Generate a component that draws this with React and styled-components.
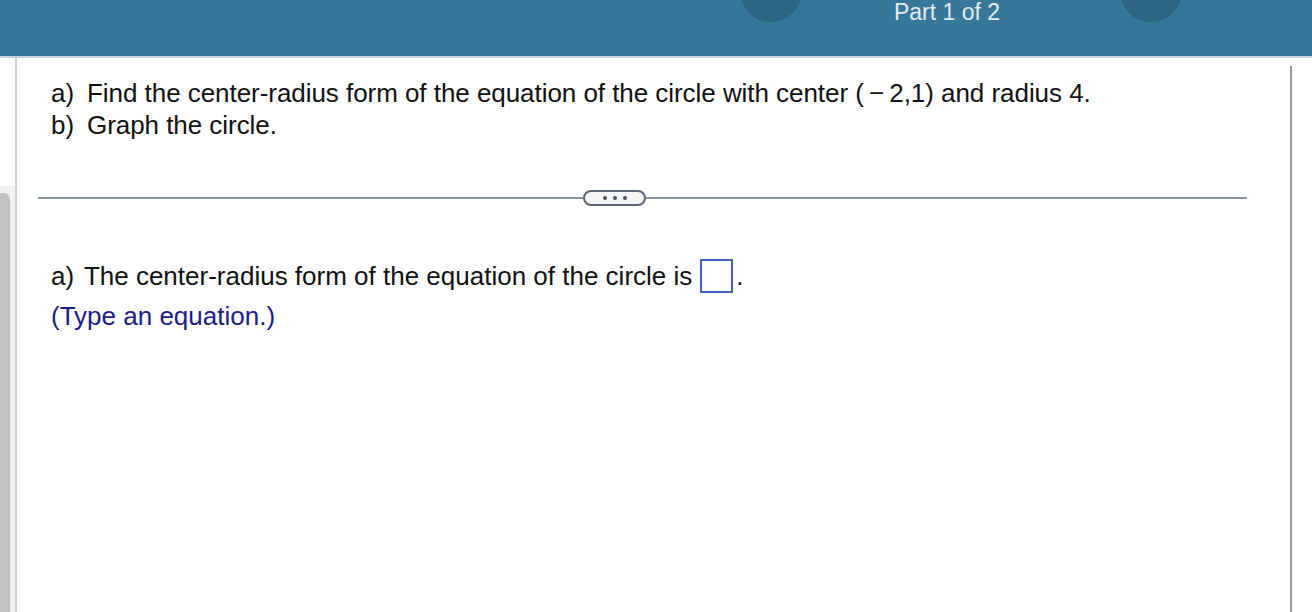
import styled, { createGlobalStyle } from "styled-components"

const Global = createGlobalStyle`
  html, body {
    margin: 0;
    padding: 0;
    background: #ffffff;
  }
  body {
    font-family: "Liberation Sans", Arial, Helvetica, sans-serif;
    color: #111;
  }
`

const Page = styled.div`
  width: 1312px;
  height: 612px;
  overflow: hidden;
  display: flex;
  flex-direction: column;
`

const Header = styled.header`
  height: 56px;
  flex-shrink: 0;
  background: #36779a;
  border-bottom: 2px solid #c6d2de;
  display: flex;
  align-items: flex-start;
  overflow: hidden;
`

const NavCircle = styled.div`
  width: 62px;
  height: 62px;
  border-radius: 50%;
  background: #2e6584;
  margin-top: -40px;
  margin-left: ${(p) => p.$left}px;
  flex-shrink: 0;
`

const PartLabel = styled.div`
  width: 110px;
  margin-left: 90px;
  padding-top: 1px;
  text-align: center;
  font-size: 23px;
  line-height: 22px;
  color: #e3ebf2;
  white-space: nowrap;
`

const Main = styled.div`
  flex: 1;
  display: flex;
  min-height: 0;
`

const Gutter = styled.div`
  width: 15px;
  border-right: 2px solid #cfd1dd;
  display: flex;
  flex-direction: column;
`

const GutterSpace = styled.div`
  height: 128px;
`

const Track = styled.div`
  flex: 1;
  background: #f1f1f1;
  padding-top: 7px;
  display: flex;
`

const Thumb = styled.div`
  width: 10px;
  background: #c2c2c2;
  border-radius: 0 6px 0 0;
`

const Content = styled.div`
  flex: 1;
  display: flex;
  flex-direction: column;
  padding-top: 19px;
  font-size: 26px;
`

const RightEdge = styled.div`
  width: 2px;
  margin-top: 8px;
  margin-right: 20px;
  background: #9199a8;
`

const Question = styled.div`
  display: grid;
  grid-template-columns: 36px 1fr;
  padding-left: 34px;
  line-height: 32px;
  white-space: nowrap;
  letter-spacing: -0.05px;
`

const Divider = styled.div`
  display: flex;
  align-items: center;
  height: 16px;
  margin: 49px 43px 0 21px;
`

const Rule = styled.div`
  height: 2px;
  background: #8a93a3;
  width: ${(p) => (p.$width ? `${p.$width}px` : "auto")};
  flex: ${(p) => (p.$width ? "none" : 1)};
`

const MoreButton = styled.button`
  width: 63px;
  height: 16px;
  box-sizing: border-box;
  border: 2px solid #5b6575;
  border-radius: 8px;
  background: #f4f5f7;
  padding: 0;
  display: flex;
  align-items: center;
  justify-content: center;
  gap: 6px;
  cursor: pointer;
`

const Dot = styled.span`
  width: 4px;
  height: 4px;
  border-radius: 50%;
  background: #4a5160;
`

const AnswerRow = styled.div`
  display: flex;
  align-items: center;
  height: 36px;
  margin-top: 52px;
  padding-left: 34px;
  white-space: pre;
`

const Label = styled.span`
  margin-right: 3px;
`

const AnswerBox = styled.span`
  display: inline-block;
  width: 33px;
  height: 34px;
  box-sizing: border-box;
  border: 2px solid #3d61c4;
  margin-left: 8px;
`

const Period = styled.span`
  margin-left: 3px;
`

const Hint = styled.div`
  margin-top: 6px;
  padding-left: 34px;
  line-height: 32px;
  color: #1b1b8a;
`

export default function App() {
  return (
    <Page>
      <Global />
      <Header>
        <NavCircle $left={740} />
        <PartLabel>Part 1 of 2</PartLabel>
        <NavCircle $left={118} />
      </Header>
      <Main>
        <Gutter>
          <GutterSpace />
          <Track>
            <Thumb />
          </Track>
        </Gutter>
        <Content>
          <Question>
            <span>a)</span>
            <span>Find the center-radius form of the equation of the circle with center (&thinsp;−&thinsp;2,1) and radius 4.</span>
            <span>b)</span>
            <span>Graph the circle.</span>
          </Question>
          <Divider>
            <Rule $width={545} />
            <MoreButton aria-label="more">
              <Dot />
              <Dot />
              <Dot />
            </MoreButton>
            <Rule />
          </Divider>
          <AnswerRow>
            <Label>a)</Label> The center-radius form of the equation of the circle is
            <AnswerBox />
            <Period>.</Period>
          </AnswerRow>
          <Hint>(Type an equation.)</Hint>
        </Content>
        <RightEdge />
      </Main>
    </Page>
  )
}
